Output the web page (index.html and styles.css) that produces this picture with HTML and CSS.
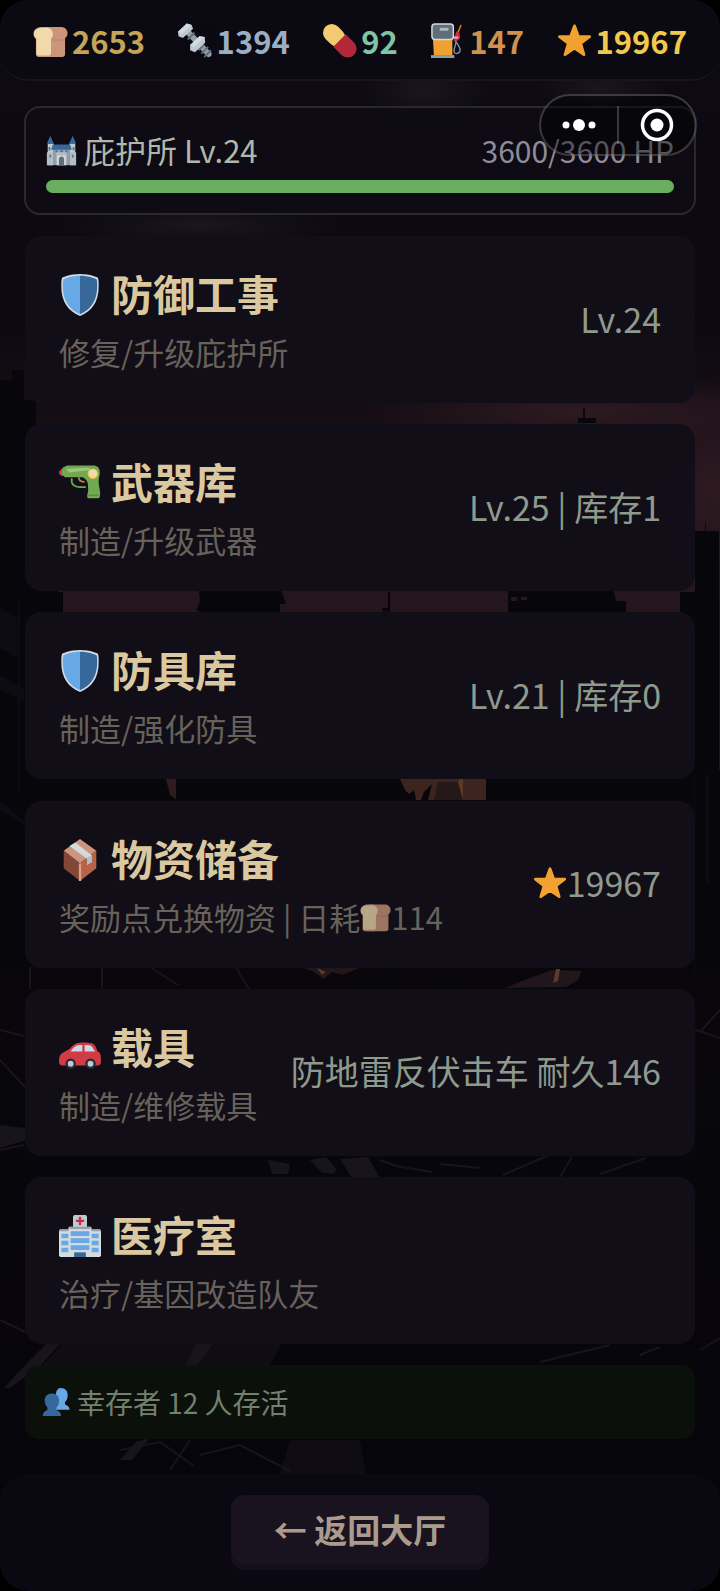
FILE: index.html
```html
<!DOCTYPE html>
<html lang="zh-CN">

<head>
    <meta charset="UTF-8">
    <meta name="viewport" content="width=device-width, initial-scale=1">
    <title>庇护所</title>
    <link rel="stylesheet" href="styles.css">
</head>

<body>
    <!-- shared icons -->
    <svg class="sprite" aria-hidden="true">
        <symbol id="icon-bread" viewBox="0 0 36 36">
            <path fill="#d99e82" d="M10 4h19c4 0 6.500 3 6.500 6.500 0 2.500-1 4-2.500 5V32c0 2-1 3-3 3H8z"/>
            <path fill="#c38a70" d="M20 17h13v1H20z"/>
            <path fill="#d99e82" d="M9 4C4 4 .5 7 .5 11c0 2.500 1 4.200 2.500 5.500V32c0 2 1 3 3 3h11c2 0 3-1 3-3V16.500c1.500-1.300 2-3 2-5C22 7 18 4 14 4z"/>
            <path fill="#ffe8b6" d="M9 5c-4.500 0-8 2.500-8 6.500 0 2 1 3.500 2.500 4.500v15c0 1.500.8 2.500 2.500 2.500h10c1.700 0 2.500-1 2.500-2.500V16c1.300-1 2-2.500 2-4.500C20.500 7.500 17.500 5 14 5z"/>
        </symbol>
        <symbol id="icon-star" viewBox="0 0 36 36">
            <path fill="#ffac33" stroke="#ffac33" stroke-width="3" stroke-linejoin="round" d="M18 3l4 11h11.500l-9.200 7 3.400 11.500L18 25.800l-9.700 6.700L11.700 21l-9.200-7H14z"/>
        </symbol>
        <symbol id="icon-shield" viewBox="0 0 36 36">
            <path fill="#dce8f2" d="M33 3s-6-3-15-3S3 3 3 3c-1 1-1 3-1 8 0 13 6 21 16 25 10-4 16-12 16-25 0-5 0-7-1-8z"/>
            <path fill="#6db3f2" d="M18 34.500C9 30.500 3.300 23 3.300 11c0-3.500 0-5.500.6-6.500C6 3.500 11 1.500 18 1.500z"/>
            <path fill="#3a6ea5" d="M18 34.500C27 30.500 32.700 23 32.700 11c0-3.500 0-5.500-.6-6.500C30 3.500 25 1.500 18 1.500z"/>
        </symbol>
    </svg>

    <!-- ruined city behind the cards -->
    <svg class="scene" viewBox="0 0 720 1591" preserveAspectRatio="xMidYMid slice" aria-hidden="true">
        <defs>
            <linearGradient id="sky" x1="0" y1="0" x2="0" y2="1">
                <stop offset="0" stop-color="#0c0a13"/>
                <stop offset=".2" stop-color="#0d0911"/>
                <stop offset=".26" stop-color="#150d14"/>
                <stop offset=".37" stop-color="#24161c"/>
                <stop offset=".48" stop-color="#24161c"/>
                <stop offset=".5" stop-color="#09070c"/>
                <stop offset="1" stop-color="#06050b"/>
            </linearGradient>
            <radialGradient id="glow">
                <stop offset="0" stop-color="#2e1a21"/>
                <stop offset="1" stop-color="#2e1a21" stop-opacity="0"/>
            </radialGradient>
            <radialGradient id="cloud">
                <stop offset="0" stop-color="#1a151f"/>
                <stop offset="1" stop-color="#1a151f" stop-opacity="0"/>
            </radialGradient>
        </defs>
        <rect width="720" height="1591" fill="url(#sky)"/>
        <ellipse cx="425" cy="90" rx="70" ry="34" fill="url(#cloud)"/>
        <ellipse cx="600" cy="88" rx="70" ry="26" fill="url(#cloud)"/>
        <ellipse cx="200" cy="225" rx="140" ry="24" fill="url(#cloud)"/>
        <ellipse cx="715" cy="490" rx="110" ry="110" fill="url(#glow)"/>
        <ellipse cx="580" cy="412" rx="220" ry="40" fill="url(#glow)"/>
        <!-- skyline -->
        <g fill="#07060b">
            <path d="M0 380h12v-10h12v30h12v180h22v12h5v200H0z"/>
            <path d="M578 423v-5h5v-10h2v10h11v5z"/>
            <path d="M198 580h88l-5 10 5 14h-6v10h-76l-8-4 4-8z"/>
            <path d="M382 611v-3h6v-16h2v20zM508 585h104l4 16h10v12H508z"/>
            <path d="M695 531h10v-8h1v8h13v300h-39V592h15z"/>
            <path d="M0 770h720v200H0z"/>
        </g>
        <path fill="#26181f" d="M511 597h6v4h-6zM521 597h6v3h-6z"/>
        <path fill="#0e0c13" d="M0 608l17 10v40l-17-10zM0 675l24 14v12L0 690zM18 600h2v190h-2zM0 800l25 22v3L0 810zM694 775h1v205h-1zM706 775h3v110h-3z"/>
        <!-- fires -->
        <path fill="#3d241f" d="M400 779h86v21h-58l4-16-8 8-3 8h-5l-2-10-5 4-4-4z"/>
        <path fill="#251819" d="M438 782h20l5 18h-29z"/>
        <path fill="#5b3929" d="M460 779h3v21l-5-18z"/>
        <path fill="#301c1d" d="M166 779h10v20l-6-4z"/>
        <path fill="#21161a" d="M300 967h62l-20 8-10-3-8 7-12-8zM505 988l22-9 25-9 30 1-4 9-12 7z"/>
        <path fill="#5e3a2c" d="M317 968l9 4-4 3zM556 969h4l-2 12-5 2z"/>
        <path fill="#08070b" d="M355 989l6-22 6 22zM375 989l5-12 6 12zM392 989l3-18h6l3 18zM433 989l8-20 8 20zM452 989l7-14 6 14zM490 989l8-6 10 6z"/>
        <!-- rubble -->
        <g fill="none" stroke="#17141b" stroke-width="2">
            <path d="M30 967v22M102 967v22M150 967l28 18M236 967l14 24M0 1060l26 28M0 1030l24 6M690 1028l30 10M700 1032l20-22M503 1175l46-20M560 1177l12-20M600 1174l46-16M380 1160l16 6 36 6M440 1164l40 4M0 1150l24-5"/>
            <path d="M0 1320l25 12M540 1362l70-17M640 1355l20-8M700 1350l20-12M120 1450l40-8 34 24M200 1455l40-10 50 26M170 1470l20-30"/>
        </g>
        <g fill="#17141b">
            <path d="M0 1125l25 3 1 12-26 8zM268 1160l22 4-2 10h-16zM310 1160l16-3 11 12-3 5-12-1zM340 1159l28-2 12 21h-28z"/>
            <path d="M46 1344h14l-20 22-30 22H4l24-26zM195 1344h18l-18 24h-10zM136 1442l14-4-18 22h-12z"/>
            <path d="M62 1344h220l-14 24H40zM290 1440h70l6 34h-86z" opacity=".5"/>
        </g>
    </svg>

    <div class="app">
        <header class="resources">
            <div class="resources__item resources__item--food">
                <svg class="icon"><use href="#icon-bread"/></svg>2653
            </div>
            <div class="resources__item resources__item--metal">
                <svg class="icon" viewBox="0 0 36 36">
                    <path stroke="#99aab5" stroke-width="6" stroke-linecap="round" d="M10 9l21.500 23"/>
                    <path stroke="#66757f" stroke-width="2" d="M10 17l7-7M24 31.500l7-7M27 35l7-7M21 28l6-6"/>
                    <path fill="#ccd6dd" d="M9 .5L14 2l1.500 4L5 15.500.5 13.500 0 9z"/>
                    <path fill="#e1e8ed" d="M9 .5L14 2 4 11 0 9z"/>
                    <path fill="#ccd6dd" d="M22 13.500l5.500 1 .5 5.500-10.500 10-5-2v-5.500z"/>
                    <path fill="#e1e8ed" d="M22 13.500l5.500 1-10.500 10-4.500-2z"/>
                </svg>1394
            </div>
            <div class="resources__item resources__item--medicine">
                <svg class="icon" viewBox="0 0 36 36">
                    <path stroke="#ffd878" stroke-width="18" stroke-linecap="round" d="M10 10l5 5"/>
                    <path fill="#be2a3c" d="M24.400 11.600l8.500 8.500a9 9 0 0 1-12.800 12.800l-8.500-8.500z"/>
                </svg>92
            </div>
            <div class="resources__item resources__item--fuel">
                <svg class="icon" viewBox="0 0 36 36">
                    <path fill="none" stroke="#8899a6" stroke-width="1.500" d="M25 17c2 1 2 3 1 6-2 6-2 8 1 8.500 4 0 5-4 3-7l-3-5"/>
                    <path fill="#dd2e44" d="M27 9l3-1 1 8-4 3-3-1z"/>
                    <path stroke="#ccd6dd" stroke-width="2" d="M24 15h5"/>
                    <path stroke="#f4900c" stroke-width="1.500" d="M29 9l3-7"/>
                    <path fill="#ffac33" d="M3 16h20v17H4z"/>
                    <path fill="#99aab5" d="M1 33h24v3H1z"/>
                    <rect x="2" y="1" width="22" height="16" rx="3" fill="#66757f" stroke="#e1e8ed" stroke-width="1.500"/>
                    <rect x="10" y="5" width="9" height="3" rx="1" fill="#b8c5cd"/>
                </svg>147
            </div>
            <div class="resources__item resources__item--points">
                <svg class="icon"><use href="#icon-star"/></svg>19967
            </div>
        </header>

        <main class="shelter">
            <section class="status">
                <div class="status__row">
                    <span class="status__name">
                        <svg class="icon" viewBox="0 0 36 36">
                            <path fill="#ccd6dd" d="M2 10h7v25H2zM27 10h7v25h-7z"/>
                            <path fill="#99aab5" d="M9 16h18v19H9z"/>
                            <path fill="#bdc9d2" d="M12 18h12v17H12zM1 20h7v15H1zM28 20h7v15h-7z"/>
                            <path fill="#3a6ea5" d="M5 1l4 9H1zM31 1l4 9h-8zM8 11h20l2 6H6z"/>
                            <path fill="#66757f" d="M3 14h2v4H3zM31 14h2v4h-2zM4 23h2v3H4zM30 23h2v3h-2zM11 18h3v2h-3zM16 18h4v2h-4zM22 18h3v2h-3z"/>
                            <path fill="#e1e8ed" d="M13 24h10v11H13z"/>
                            <path fill="#66757f" d="M15 35v-7c0-4 6-4 6 0v7z"/>
                        </svg>
                        庇护所 Lv.24
                    </span>
                    <span class="status__hp">3600/3600 HP</span>
                </div>
                <div class="bar" role="progressbar" aria-label="HP" aria-valuemin="0" aria-valuemax="3600" aria-valuenow="3600">
                    <div class="bar__fill" style="width: 100%"></div>
                </div>
            </section>

            <button class="card" type="button">
                <span class="card__body">
                    <span class="card__title"><svg class="icon"><use href="#icon-shield"/></svg>防御工事</span>
                    <span class="card__desc">修复/升级庇护所</span>
                </span>
                <span class="card__info">Lv.24</span>
            </button>

            <button class="card" type="button">
                <span class="card__body">
                    <span class="card__title">
                        <svg class="icon" viewBox="0 0 36 36">
                            <path fill="#dd2e44" d="M0 8l2-2h2v6H2l-2-2z"/>
                            <path fill="none" stroke="#77b255" stroke-width="1.500" d="M11 14c-1 5 2 7.500 7 7.500h5"/>
                            <path fill="none" stroke="#c1873f" stroke-width="1.500" d="M17 13c0 3 2 4 5 4"/>
                            <path fill="#77b255" d="M3 5l4-2h22c4 0 6 2 6 6 0 3-1 4-1 7 0 6 2 9 1 14l-1 1h-9c-2-1 0-4 0-7 0-5 0-9-5-11H5l-3-3z"/>
                            <path fill="#a6d388" d="M6 6l17-1c4 0 5 1 2 2L9 9z"/>
                            <path fill="#5c913b" d="M24 28h10v1H24z"/>
                            <circle cx="29" cy="10" r="4" fill="#ffe8b6" stroke="#ffcc4d" stroke-width="1"/>
                        </svg>武器库
                    </span>
                    <span class="card__desc">制造/升级武器</span>
                </span>
                <span class="card__info">Lv.25 | 库存1</span>
            </button>

            <button class="card" type="button">
                <span class="card__body">
                    <span class="card__title"><svg class="icon"><use href="#icon-shield"/></svg>防具库</span>
                    <span class="card__desc">制造/强化防具</span>
                </span>
                <span class="card__info">Lv.21 | 库存0</span>
            </button>

            <button class="card" type="button">
                <span class="card__body">
                    <span class="card__title">
                        <svg class="icon" viewBox="0 0 36 36">
                            <path fill="#d99e82" d="M18 0l14 10-14 11L4 10z"/>
                            <path fill="#8a4b38" d="M4 10l14 11v15L4 25z"/>
                            <path fill="#c1694f" d="M32 10L18 21v15l14-11z"/>
                            <path fill="#eba98c" d="M17 21h2v15l-1 .4-1-.4z"/>
                            <path fill="#e1e8ed" d="M9 6l5-3 14 11v6l-4 2v-5z"/>
                            <path fill="#bdc9d2" d="M24 16l4-2v6l-4 2z"/>
                        </svg>物资储备
                    </span>
                    <span class="card__desc">奖励点兑换物资 | 日耗<svg class="icon"><use href="#icon-bread"/></svg>114</span>
                </span>
                <span class="card__info"><svg class="icon"><use href="#icon-star"/></svg>19967</span>
            </button>

            <button class="card" type="button">
                <span class="card__body">
                    <span class="card__title">
                        <svg class="icon" viewBox="0 0 36 36">
                            <path fill="#dd3e48" d="M0 30c0-5 1-7 5-9 4-1 7-6 10-7 3-1 9-1 13 0 3 1 4 4 5 7 3 1 3 4 3 8 0 3-1 4-3 4H3c-2 0-3-1-3-3z"/>
                            <path fill="#d5e4f5" d="M10 21c2-3 4-5 7-5.500h3V21zM22 15.500c3 0 5 0 6 1l3 4.500h-9z"/>
                            <circle cx="10" cy="31.500" r="4.500" fill="#292f33"/>
                            <circle cx="27" cy="31.500" r="4.500" fill="#292f33"/>
                            <circle cx="10" cy="31.500" r="2.500" fill="#ccd6dd"/>
                            <circle cx="27" cy="31.500" r="2.500" fill="#ccd6dd"/>
                        </svg>载具
                    </span>
                    <span class="card__desc">制造/维修载具</span>
                </span>
                <span class="card__info">防地雷反伏击车 耐久146</span>
            </button>

            <button class="card" type="button">
                <span class="card__body">
                    <span class="card__title">
                        <svg class="icon" viewBox="0 0 36 36">
                            <path fill="#ccd6dd" d="M12 1l1-1h10l1 1v10H12z"/>
                            <path fill="#dd2e44" d="M17 1.500h2V4h2.500v2H19v2.500h-2V6h-2.500V4H17z"/>
                            <path fill="#e1e8ed" d="M0 14l1-1h7v-2l1-1h18l1 1v2h7l1 1v21l-1 1H1l-1-1z"/>
                            <path fill="#99aab5" d="M0 13l1-1h7v2H0zM28 12h7l1 1v1h-8zM9 10h18v2H9z"/>
                            <path fill="#6db3f2" d="M2 16h6v4H2zM2 22h6v4H2zM2 28h6v4H2zM28 16h6v4h-6zM28 22h6v4h-6zM28 28h6v4h-6zM10 14h16v4H10zM10 20h16v4H10zM10 26h16v4H10z"/>
                            <path fill="#3a6ea5" d="M13 32h10v4H13z"/>
                        </svg>医疗室
                    </span>
                    <span class="card__desc">治疗/基因改造队友</span>
                </span>
            </button>

            <section class="survivors">
                <svg class="icon" viewBox="0 0 36 36">
                    <path fill="#6db3f2" d="M24 0c6 0 9 4 9 9 0 4-1 7-3.500 9v2c0 3 6 2 6 8H18V8c0-4 2-8 6-8z"/>
                    <path fill="#3a6ea5" d="M13 7c6 0 9 4 9 9 0 4-1 7-3.500 9v2c0 3 6 2 6 9H1c0-7 6-6 6-9v-2C5 23 3.500 20 3.500 16c0-5 3-9 9.500-9z"/>
                </svg>
                幸存者 12 人存活
            </section>
        </main>

        <footer class="footer">
            <button class="back" type="button">← 返回大厅</button>
        </footer>
    </div>

    <div class="capsule">
        <button class="capsule__btn" type="button" aria-label="更多">
            <svg width="40" height="36" viewBox="0 0 40 36" fill="#fff">
                <circle cx="7" cy="18" r="3.500"/>
                <circle cx="20" cy="18" r="6"/>
                <circle cx="33" cy="18" r="3.500"/>
            </svg>
        </button>
        <button class="capsule__btn" type="button" aria-label="关闭">
            <svg width="36" height="36" viewBox="0 0 36 36">
                <circle cx="18" cy="18" r="14.500" fill="none" stroke="#fff" stroke-width="3.500"/>
                <circle cx="18" cy="18" r="6.500" fill="#fff"/>
            </svg>
        </button>
    </div>
</body>

</html>
```
FILE: styles.css
```css
* {
    box-sizing: border-box;
}

body {
    margin: 0;
    background: #000;
    font-family: "Noto Sans CJK SC", sans-serif;
}

button {
    border: none;
    font-family: inherit;
}

.sprite {
    position: absolute;
    width: 0;
    height: 0;
}

.scene {
    position: absolute;
    top: 0;
    left: 0;
    width: 100%;
    height: 100%;
    border-radius: 28px;
}

.app {
    position: relative;
    display: flex;
    flex-direction: column;
    min-height: 100vh;
    overflow: hidden;
    border-radius: 28px;
}

.icon {
    flex: none;
    width: 1em;
    height: 1em;
    opacity: 0.94;
}

/* resources */
.resources {
    display: flex;
    align-items: center;
    justify-content: space-between;
    padding: 19px 33px 17px;
    border-bottom: 2px solid #17151d;
    border-radius: 28px;
    background: #0b0912;
    font-size: 31px;
    font-weight: bold;
    line-height: 43px;
}
.resources__item {
    display: flex;
    align-items: center;
    gap: 4px;
}
.resources__item .icon {
    width: 35px;
    height: 35px;
}
.resources__item--food {
    color: #c4a35a;
}
.resources__item--metal {
    color: #9aaec4;
}
.resources__item--medicine {
    color: #7fc4a4;
}
.resources__item--fuel {
    color: #cf924e;
}
.resources__item--points {
    color: #f2c94f;
}

/* shelter */
.shelter {
    flex: 1;
    display: flex;
    flex-direction: column;
    justify-content: space-between;
    padding: 25px 25px 35px;
}
.status {
    margin: 0 -1px;
    padding: 20px;
    border: 2px solid #29282c;
    border-radius: 16px;
    background: rgba(14, 11, 20, 0.8);
}
.status__row {
    display: flex;
    justify-content: space-between;
    font-size: 31px;
    line-height: 44px;
}
.status__name {
    display: flex;
    align-items: center;
    gap: 7px;
    color: #b0b8ab;
}
.status__hp {
    color: #8f8c98;
    font-size: 30px;
}
.bar {
    height: 13px;
    margin-top: 8px;
    border-radius: 7px;
    background: #1c1a22;
}
.bar__fill {
    height: 100%;
    border-radius: 7px;
    background: #68ae5e;
}

.card {
    display: flex;
    align-items: center;
    justify-content: space-between;
    padding: 27px 34px 29px;
    border-radius: 16px;
    background: rgba(18, 14, 25, 0.97);
    text-align: left;
    white-space: nowrap;
}
.card__title {
    display: flex;
    align-items: center;
    gap: 10px;
    color: #dac8a0;
    font-size: 42px;
    font-weight: bold;
    line-height: 60px;
}
.card__title .icon {
    margin-top: 4px;
}
.card__desc {
    display: flex;
    align-items: center;
    margin-top: 7px;
    color: #67625a;
    font-size: 31px;
    line-height: 44px;
    white-space: pre;
}
.card__desc .icon {
    opacity: 0.7;
}
.card__info {
    display: flex;
    align-items: center;
    color: #8f9a8c;
    font-size: 34px;
    line-height: 48px;
}

.survivors {
    display: flex;
    align-items: center;
    gap: 7px;
    padding: 16px 17px;
    border-radius: 14px;
    background: rgba(13, 17, 11, 0.95);
    color: #74806f;
    font-size: 28px;
    line-height: 42px;
}

/* footer */
.footer {
    display: flex;
    justify-content: center;
    padding: 21px 20px;
    border-radius: 28px;
    background: #0a0810;
}
.back {
    padding: 9px 43px 15px;
    border-radius: 14px;
    background: #18131f;
    box-shadow: inset 0 -6px #140f1b;
    color: #ab9b8f;
    font-size: 33px;
    font-weight: bold;
    line-height: 51px;
}

/* menu capsule floating over the page */
.capsule {
    position: absolute;
    top: 94px;
    right: 23px;
    display: flex;
    width: 158px;
    height: 62px;
    padding: 10px 0;
    border: 2px solid rgba(255, 255, 255, 0.2);
    border-radius: 32px;
    background: rgba(0, 0, 0, 0.4);
}
.capsule__btn {
    flex: 1;
    display: flex;
    align-items: center;
    justify-content: center;
    padding: 0;
    background: none;
}
.capsule__btn + .capsule__btn {
    border-left: 2px solid rgba(255, 255, 255, 0.2);
}
```
